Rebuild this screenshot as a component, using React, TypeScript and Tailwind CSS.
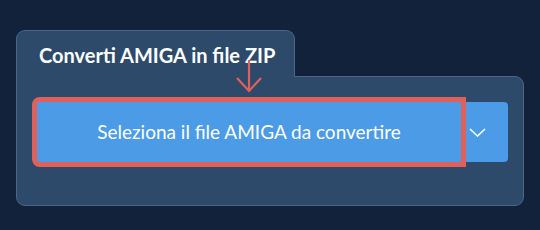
import React from 'react';

const App: React.FC = () => {
  return (
    <div
      className="w-[540px] h-[230px] bg-[#11223a] pt-[30px] pl-[16px]"
      style={{ fontFamily: 'Lato, "Noto Sans", sans-serif' }}
    >
      <div className="relative w-[508px]">
        {/* Tab */}
        <div className="relative z-10 -mb-px w-[279px] h-[47px] bg-[#2d4a6b] border border-b-0 border-[#4b6788] rounded-t-[9px] pl-[22px] pt-[12px]">
          <span className="text-white font-bold text-[20px] leading-[24px]">
            Converti AMIGA in file ZIP
          </span>
        </div>

        {/* Panel */}
        <div className="h-[130px] bg-[#2d4a6b] border border-[#4b6788] rounded-[9px] rounded-tl-none pl-[20px] pt-[25px]">
          <div className="flex h-[60px]">
            <button className="relative z-10 w-[424px] h-full bg-[#4b9be6] rounded-l-[3px] ring-[5px] ring-[#e0605c] text-white text-[19px] font-normal">
              Seleziona il file AMIGA da convertire
            </button>
            <button className="w-[47px] h-full bg-[#4b9be6] rounded-r-[4px] flex items-center pl-[8px]">
              <svg width="17" height="9" viewBox="0 0 17 9" fill="none">
                <path d="M1 1l7.5 7L16 1" stroke="white" strokeWidth="1.6" />
              </svg>
            </button>
          </div>
        </div>

        {/* Red pointer arrow */}
        <svg
          className="absolute left-[220px] top-[28px] z-20"
          width="28"
          height="36"
          viewBox="0 0 28 36"
          fill="none"
        >
          <path d="M13 2v31M1 20l12 13 12-13" stroke="#e0605c" strokeWidth="2.2" />
        </svg>
      </div>
    </div>
  );
};

export default App;
